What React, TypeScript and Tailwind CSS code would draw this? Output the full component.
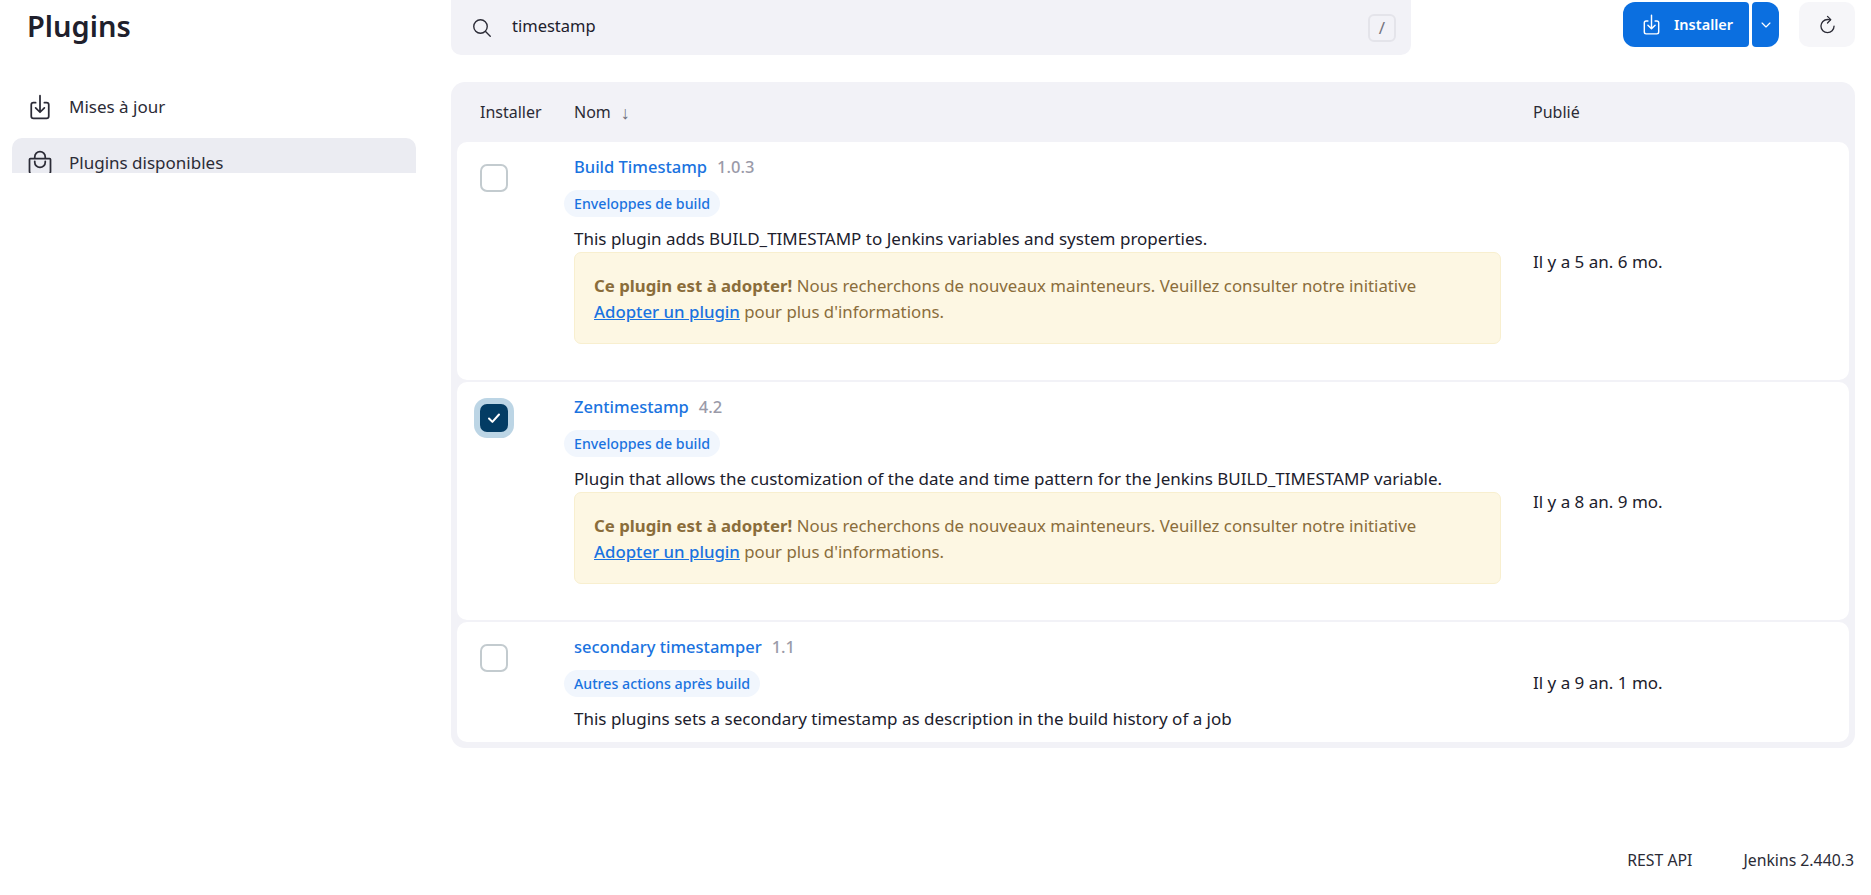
import { FC, ReactElement } from "react";

const Ion: FC<{ size: number; width?: number; className?: string; paths: string[] }> = ({
  size,
  width = 32,
  className,
  paths,
}): ReactElement => (
  <svg
    viewBox="0 0 512 512"
    width={size}
    height={size}
    fill="none"
    stroke="currentColor"
    strokeWidth={width}
    strokeLinecap="round"
    strokeLinejoin="round"
    className={className}
  >
    {paths.map((d) => (
      <path key={d} d={d} />
    ))}
  </svg>
);

const downloadPaths = [
  "M336 176h40a40 40 0 0140 40v208a40 40 0 01-40 40H136a40 40 0 01-40-40V216a40 40 0 0140-40h40",
  "M176 272l80 80 80-80M256 48v288",
];
const bagPaths = [
  "M80 176a16 16 0 00-16 16v216c0 30.24 25.76 56 56 56h272c30.24 0 56-24.51 56-54.75V192a16 16 0 00-16-16zM160 176v-32a96 96 0 0196-96h0a96 96 0 0196 96v32",
  "M160 224v16a96 96 0 0096 96h0a96 96 0 0096-96v-16",
];
const searchPaths = [
  "M221.09 64a157.09 157.09 0 10157.09 157.09A157.1 157.1 0 00221.09 64z",
  "M338.29 338.29L448 448",
];
const refreshPaths = ["M320 146s24.36-12-64-12a160 160 0 10160 160", "M256 58l80 80-80 80"];

interface IPlugin {
  name: string;
  version: string;
  tag: string;
  description: string;
  published: string;
  adopt: boolean;
  checked: boolean;
}

const plugins: IPlugin[] = [
  {
    name: "Build Timestamp",
    version: "1.0.3",
    tag: "Enveloppes de build",
    description: "This plugin adds BUILD_TIMESTAMP to Jenkins variables and system properties.",
    published: "Il y a 5 an. 6 mo.",
    adopt: true,
    checked: false,
  },
  {
    name: "Zentimestamp",
    version: "4.2",
    tag: "Enveloppes de build",
    description:
      "Plugin that allows the customization of the date and time pattern for the Jenkins BUILD_TIMESTAMP variable.",
    published: "Il y a 8 an. 9 mo.",
    adopt: true,
    checked: true,
  },
  {
    name: "secondary timestamper",
    version: "1.1",
    tag: "Autres actions après build",
    description: "This plugins sets a secondary timestamp as description in the build history of a job",
    published: "Il y a 9 an. 1 mo.",
    adopt: false,
    checked: false,
  },
];

const PluginRow: FC<{ plugin: IPlugin }> = ({ plugin }): ReactElement => (
  <div
    className={`flex rounded-[10px] bg-white pl-[23px] ${plugin.adopt ? "h-[238px]" : "h-[120px]"}`}
  >
    <div className="w-[94px] shrink-0 pt-[22px]">
      {plugin.checked ? (
        <span className="block size-7 rounded-[7px] bg-[#033c64] shadow-[0_0_0_6px_#bcd5e5]">
          <svg viewBox="0 0 28 28" className="size-7 text-white" fill="none" stroke="currentColor" strokeWidth="2" strokeLinecap="round" strokeLinejoin="round">
            <path d="M9 14.5l3.4 3.4L19 10.5" />
          </svg>
        </span>
      ) : (
        <span className="block size-7 rounded-[7px] border-2 border-[#c3cbcf] bg-white" />
      )}
    </div>
    <div className="w-[927px] shrink-0 pt-[13px]">
      <div className="flex h-6 items-center gap-[10px] leading-6">
        <a className="text-[16.5px] font-medium text-[#1a73e0]">{plugin.name}</a>
        <span className="text-[16.5px] font-medium text-[#9a9aa8]">{plugin.version}</span>
      </div>
      <span className="mt-[11px] -ml-[10px] flex h-[27px] w-fit items-center rounded-full bg-[#f1f6fd] px-[10px] text-[14.2px] font-medium text-[#1a73e0]">
        {plugin.tag}
      </span>
      <p className="mt-[11px] text-[17px] leading-[22px] text-[#20202c]">{plugin.description}</p>
      {plugin.adopt && (
        <div className="mt-[2px] h-[92px] rounded-[7px] border border-[#f8efcf] bg-[#fdf7e3] px-[19px] pt-[20px] text-[16.8px] leading-[26px] text-[#8a6d3b]">
          <b className="font-bold">Ce plugin est à adopter!</b> Nous recherchons de nouveaux mainteneurs. Veuillez consulter notre initiative
          <br />
          <a className="font-medium text-[#1a73e0] underline">Adopter un plugin</a> pour plus d'informations.
        </div>
      )}
    </div>
    <div className="flex items-center pt-[2px] pl-[32px] text-[17px] text-[#20202c]">{plugin.published}</div>
  </div>
);

const App: FC = (): ReactElement => {
  return (
    <div className="flex h-screen flex-col overflow-hidden bg-white font-['Noto_Sans',sans-serif] text-[#20202c]">
      <div className="flex flex-1">
        <aside className="w-[451px] shrink-0 pl-3">
          <div className="h-[173px] w-[404px] overflow-hidden">
            <h1 className="h-[85px] pt-[4px] pl-[15px] text-[29px] leading-[44px] font-semibold">Plugins</h1>
            <div className="flex h-[43px] items-center gap-[15px] pl-[14px] text-[17px] text-[#2b2b36]">
              <Ion size={28} paths={downloadPaths} />
              Mises à jour
            </div>
            <div className="mt-[10px] flex h-[50px] items-center gap-[15px] rounded-[10px] bg-[#ebecf2] pl-[14px] text-[17px] text-[#2b2b36]">
              <Ion size={28} paths={bagPaths} />
              Plugins disponibles
            </div>
          </div>
        </aside>
        <main className="w-[1404px] shrink-0">
          <div className="flex h-[55px] items-start">
            <div className="flex h-[55px] w-[960px] items-center rounded-b-[10px] bg-[#f2f2f7] pr-[15px] pl-[20px]">
              <Ion size={22} paths={searchPaths} className="text-[#2b2b36]" />
              <span className="mb-[2px] ml-[19px] flex-1 text-[16.5px] text-[#20202c]">timestamp</span>
              <span className="flex size-[28px] items-center justify-center rounded-[6px] border-2 border-[#e4e4ea] text-[17px] text-[#75757f]">
                /
              </span>
            </div>
            <div className="ml-auto flex items-start pt-[2px]">
              <button className="flex h-[45px] w-[126px] items-center gap-[11px] rounded-l-[12px] rounded-r-[4px] bg-[#0b6fe0] pl-[17px] text-[14.5px] font-semibold text-white">
                <Ion size={23} paths={downloadPaths} />
                Installer
              </button>
              <button className="ml-[3px] flex h-[45px] w-[27px] items-center justify-center rounded-l-[4px] rounded-r-[12px] bg-[#0b6fe0] text-white">
                <Ion size={14} width={44} paths={["M112 184l144 144 144-144"]} />
              </button>
              <button className="ml-[20px] flex h-[45px] w-[56px] items-center justify-center rounded-[10px] bg-[#f6f6f9] text-[#2b2b36]">
                <Ion size={21} paths={refreshPaths} />
              </button>
            </div>
          </div>
          <section className="mt-[27px] rounded-[14px] bg-[#f2f2f7] px-[6px] pb-[6px]">
            <div className="flex h-[60px] items-center pl-[23px] text-[16px] text-[#2b2b36]">
              <span className="w-[94px]">Installer</span>
              <span className="flex w-[959px] items-center gap-[10px]">
                Nom
                <span className="text-[18px] leading-none text-[#6f6f7a]">↓</span>
              </span>
              <span>Publié</span>
            </div>
            <div className="flex flex-col gap-[2px]">
              {plugins.map((plugin: IPlugin) => (
                <PluginRow key={plugin.name} plugin={plugin} />
              ))}
            </div>
          </section>
        </main>
      </div>
      <footer className="flex h-[60px] justify-end gap-[51px] pt-[14px] pr-[17px] text-[15.8px] text-[#2b2b36]">
        <a>REST API</a>
        <span>Jenkins 2.440.3</span>
      </footer>
    </div>
  );
};

export default App;
